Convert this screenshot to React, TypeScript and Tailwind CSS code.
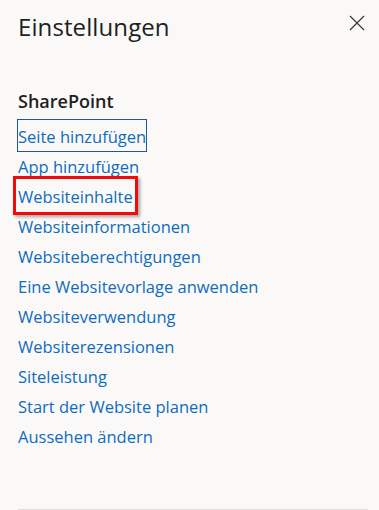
import React from 'react';

const links = [
  'Seite hinzufügen',
  'App hinzufügen',
  'Websiteinhalte',
  'Websiteinformationen',
  'Websiteberechtigungen',
  'Eine Websitevorlage anwenden',
  'Websiteverwendung',
  'Websiterezensionen',
  'Siteleistung',
  'Start der Website planen',
  'Aussehen ändern',
];

const App: React.FC = () => {
  return (
    <div className="w-[379px] h-[510px] overflow-hidden bg-[#faf9f8] text-[#201f1e] font-['Open_Sans',sans-serif]">
      {/* Header */}
      <div className="flex items-start justify-between pl-[18px] pr-[14px] pt-[11px]">
        <h1 className="text-[24px] leading-[32px] font-normal tracking-[0.1px]">Einstellungen</h1>
        <button className="mt-[4px] w-[16px] h-[16px] flex items-center justify-center">
          <svg width="16" height="16" viewBox="0 0 16 16" fill="none">
            <path d="M1 1L15 15M15 1L1 15" stroke="#323130" strokeWidth="1.1" />
          </svg>
        </button>
      </div>

      {/* SharePoint section */}
      <div className="pl-[18px] pr-[11px] pt-[46px]">
        <h2 className="text-[18px] leading-[24px] font-semibold">SharePoint</h2>
        <ul className="mt-[9px]">
          {links.map((label, i) => (
            <li key={label} className="h-[30px] flex items-center">
              <span className="relative text-[16.5px] leading-[22px] text-[#0f6cbd]">
                {label}
                {i === 0 && (
                  <span className="absolute left-[-1px] right-[-1px] top-[-7px] bottom-[-4px] border border-[#1b5a96]" />
                )}
                {i === 2 && (
                  <span className="absolute left-[-5px] right-[-5px] top-[-10px] bottom-[-7px] border-[3px] border-[#f00a0a] shadow-[2px_2px_3px_rgba(0,0,0,0.35)]" />
                )}
              </span>
            </li>
          ))}
        </ul>
        <div className="mt-[57px] h-[2px] w-[350px] bg-[#dddbd9]" />
      </div>
    </div>
  );
};

export default App;
